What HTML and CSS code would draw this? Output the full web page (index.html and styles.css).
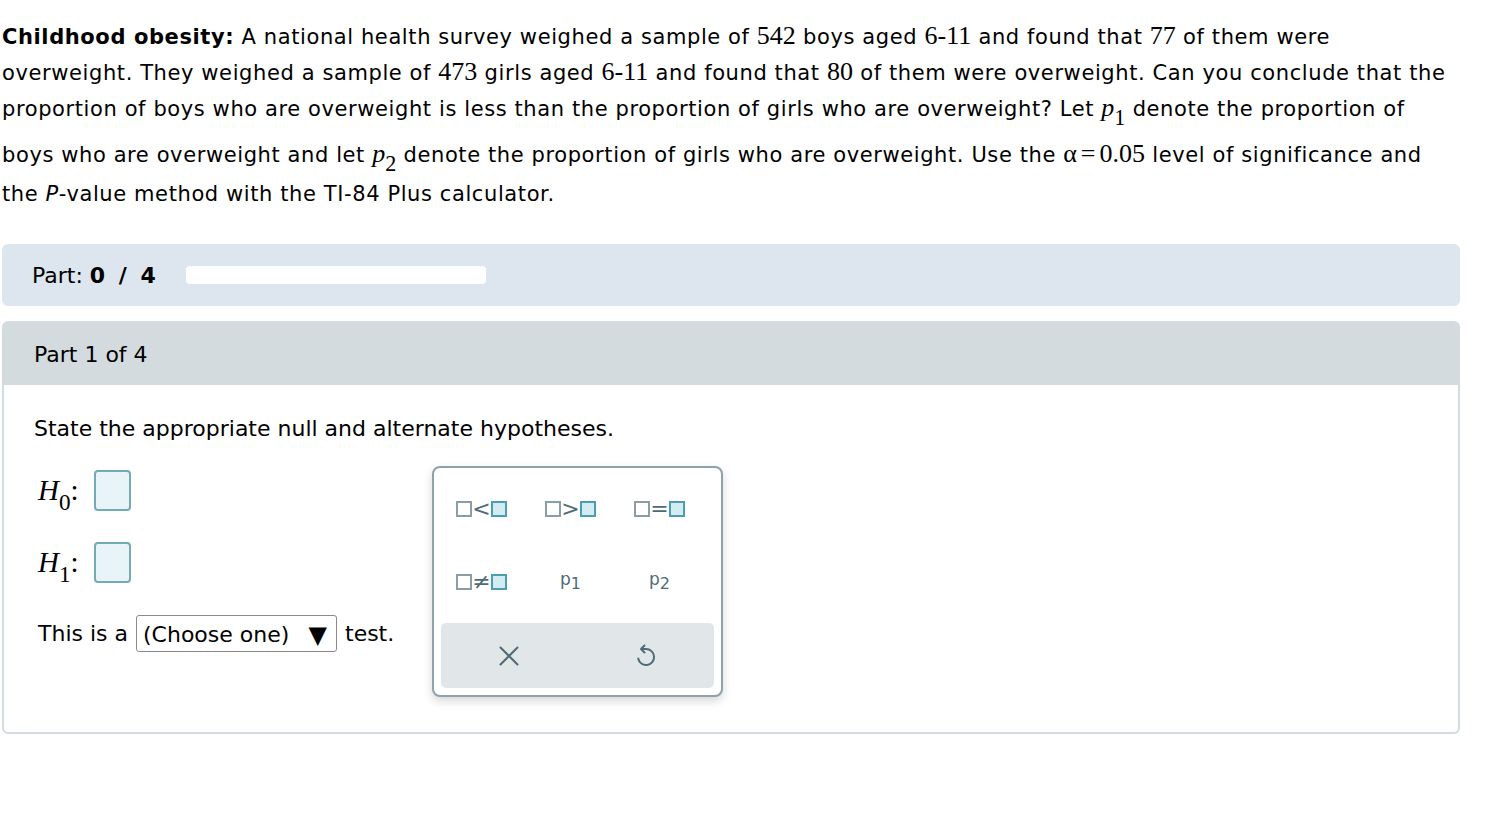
FILE: index.html
```html
<!DOCTYPE html>
<html lang="en">
<head>
<meta charset="utf-8">
<title>Childhood obesity</title>
<link rel="stylesheet" href="styles.css">
</head>
<body>
<div class="page">
  <div class="problem">
    <div class="line"><b>Childhood obesity:</b> A national health survey weighed a sample of <span class="m">542</span> boys aged <span class="m">6-11</span> and found that <span class="m">77</span> of them were</div>
    <div class="line">overweight. They weighed a sample of <span class="m">473</span> girls aged <span class="m">6-11</span> and found that <span class="m">80</span> of them were overweight. Can you conclude that the</div>
    <div class="line l3">proportion of boys who are overweight is less than the proportion of girls who are overweight? Let <span class="m"><i>p</i><sub>1</sub></span> denote the proportion of</div>
    <div class="line l4">boys who are overweight and let <span class="m"><i>p</i><sub>2</sub></span> denote the proportion of girls who are overweight. Use the <span class="m">α<span class="eq">=</span>0.05</span> level of significance and</div>
    <div class="line">the <i>P</i>-value method with the TI-84 Plus calculator.</div>
  </div>

  <div class="partbar">
    <span>Part: <b class="count">0 / 4</b></span>
    <span class="progress"></span>
  </div>

  <div class="card">
    <div class="card-head">Part 1 of 4</div>
    <div class="card-body">
      <div class="prompt">State the appropriate null and alternate hypotheses.</div>
      <div class="work">
        <div class="answers">
          <div class="hyp">
            <span class="hlabel"><i>H</i><sub>0</sub>:</span>
            <span class="ansbox"></span>
          </div>
          <div class="hyp">
            <span class="hlabel"><i>H</i><sub>1</sub>:</span>
            <span class="ansbox"></span>
          </div>
          <div class="testrow">
            <span>This is a</span>
            <span class="select"><span>(Choose one)</span><span class="arrow">▼</span></span>
            <span>test.</span>
          </div>
        </div>
        <div class="palette">
          <div class="keys">
            <div class="key"><span class="sq"></span><span class="op">&lt;</span><span class="sq blue"></span></div>
            <div class="key"><span class="sq"></span><span class="op">&gt;</span><span class="sq blue"></span></div>
            <div class="key"><span class="sq"></span><span class="op">=</span><span class="sq blue"></span></div>
            <div class="key"><span class="sq"></span><span class="op">≠</span><span class="sq blue"></span></div>
            <div class="key var"><span>p<sub>1</sub></span></div>
            <div class="key var"><span>p<sub>2</sub></span></div>
          </div>
          <div class="actions">
            <div class="action">
              <svg width="22" height="22" viewBox="0 0 22 22" aria-label="clear"><path d="M2.5 2.5 L19.5 19.5 M19.5 2.5 L2.5 19.5" stroke="#4f6b75" stroke-width="2" fill="none" stroke-linecap="round"/></svg>
            </div>
            <div class="action">
              <svg width="24" height="26" viewBox="0 0 24 26" aria-label="undo"><path d="M10.5 2.5 L7 6 L10.5 9.5 M7.5 6 H12 A8 8 0 1 1 4.2 15.5" stroke="#4f6b75" stroke-width="2" fill="none" stroke-linecap="round" stroke-linejoin="round"/></svg>
            </div>
          </div>
        </div>
      </div>
    </div>
  </div>
</div>
</body>
</html>
```

FILE: styles.css
```css
body {
  margin: 0;
  background: #fff;
  color: #000;
  font-family: "DejaVu Sans", Verdana, sans-serif;
  font-size: 22px;
}

.page {
  width: 1458px;
  margin-left: 2px;
}

.problem {
  padding-top: 18px;
  font-size: 21px;
  letter-spacing: 0.6px;
  white-space: nowrap;
}

.line {
  height: 36px;
  line-height: 36px;
}

.line.l3 { height: 46px; }
.line.l4 { height: 40px; }

.m {
  font-family: "Liberation Serif", "Times New Roman", serif;
  font-size: 26px;
  letter-spacing: 0;
}

.m sub {
  font-size: 0.85em;
  line-height: 0;
  vertical-align: -0.4em;
}

.eq {
  margin: 0 4px;
}

.partbar {
  margin-top: 32px;
  height: 62px;
  background: #dde6ee;
  border-radius: 6px;
  display: flex;
  align-items: center;
  gap: 30px;
  padding-left: 30px;
}

.count {
  word-spacing: 6px;
}

.progress {
  width: 300px;
  height: 18px;
  background: #fff;
  border-radius: 4px;
}

.card {
  margin-top: 15px;
}

.card-head {
  height: 64px;
  box-sizing: border-box;
  padding: 3px 0 0 32px;
  background: #d4dbde;
  border-radius: 6px 6px 0 0;
  display: flex;
  align-items: center;
}

.card-body {
  border: 2px solid #d4dbde;
  border-top: none;
  border-radius: 0 0 6px 6px;
  padding: 30px 30px 35px;
}

.prompt {
  line-height: 28px;
}

.work {
  margin-top: 23px;
  display: flex;
}

.answers {
  width: 398px;
  padding-left: 4px;
  box-sizing: border-box;
}

.hyp {
  display: flex;
  align-items: center;
  height: 41px;
  margin-top: 4px;
}

.hyp + .hyp {
  margin-top: 31px;
}

.hlabel {
  width: 56px;
  font-family: "Liberation Serif", "Times New Roman", serif;
  font-size: 29px;
}

.hlabel sub {
  font-size: 0.8em;
  line-height: 0;
  vertical-align: -0.45em;
}

.ansbox {
  width: 37px;
  height: 41px;
  box-sizing: border-box;
  border: 2px solid #74a9b6;
  background: #e8f4f8;
  border-radius: 4px;
}

.testrow {
  margin-top: 32px;
  display: flex;
  align-items: center;
  gap: 8px;
  height: 37px;
}

.select {
  width: 201px;
  height: 37px;
  box-sizing: border-box;
  border: 1px solid #8a8a8a;
  border-radius: 3px;
  display: flex;
  align-items: center;
  padding: 2px 9px 0 6px;
}

.arrow {
  margin-left: auto;
  font-size: 24px;
}

.palette {
  width: 291px;
  height: 231px;
  box-sizing: border-box;
  border: 2px solid #8fa2a9;
  border-radius: 8px;
  background: #fff;
  box-shadow: 0 4px 10px rgba(0, 0, 0, 0.16);
  display: flex;
  flex-direction: column;
}

.keys {
  display: grid;
  grid-template-columns: repeat(3, 89px);
  grid-auto-rows: 73px;
  padding: 4px 0 0 3px;
}

.key {
  display: flex;
  align-items: center;
  justify-content: center;
  color: #4f6b75;
  font-size: 22px;
}

.sq {
  width: 16px;
  height: 16px;
  box-sizing: border-box;
  border: 2px solid #8a9ea5;
  background: #fff;
}

.sq.blue {
  border-color: #4b9db3;
  background: #d2ecf2;
}

.op {
  width: 19px;
  text-align: center;
  line-height: 1;
}

.key.var {
  font-size: 17px;
  padding: 0 0 6px 0;
}

.key.var sub {
  font-size: 16px;
  line-height: 0;
  vertical-align: -4px;
}

.actions {
  margin: 5px 7px 7px;
  height: 65px;
  background: #e1e6e9;
  border-radius: 5px;
  display: grid;
  grid-template-columns: 1fr 1fr;
}

.action {
  display: flex;
  align-items: center;
  justify-content: center;
}
```
